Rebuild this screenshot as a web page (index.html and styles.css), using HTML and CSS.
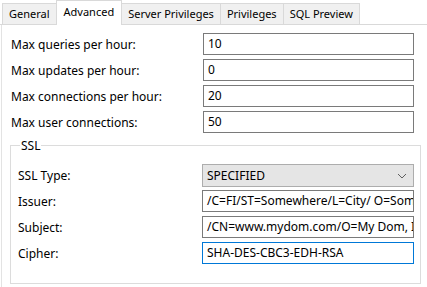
FILE: index.html
```html
<!DOCTYPE html>
<html>
<head>
<meta charset="utf-8">
<link rel="stylesheet" href="styles.css">
</head>
<body>
<div class="tabs">
  <div class="tab">General</div>
  <div class="tab active">Advanced</div>
  <div class="tab">Server Privileges</div>
  <div class="tab">Privileges</div>
  <div class="tab">SQL Preview</div>
</div>
<div class="panel">
  <div class="row"><span class="label">Max queries per hour:</span><div class="field">10</div></div>
  <div class="row"><span class="label">Max updates per hour:</span><div class="field">0</div></div>
  <div class="row"><span class="label">Max connections per hour:</span><div class="field">20</div></div>
  <div class="row"><span class="label">Max user connections:</span><div class="field">50</div></div>
  <fieldset class="group">
    <legend>SSL</legend>
    <div class="row sub"><span class="label">SSL Type:</span><div class="field select"><span>SPECIFIED</span><svg width="10" height="6" viewBox="0 0 10 6"><path d="M1 1 L5 5 L9 1" fill="none" stroke="#606060" stroke-width="1"/></svg></div></div>
    <div class="row sub"><span class="label">Issuer:</span><div class="field">/C=FI/ST=Somewhere/L=City/ O=Some Company/CN=www.mydom.com</div></div>
    <div class="row sub"><span class="label">Subject:</span><div class="field">/CN=www.mydom.com/O=My Dom, Inc./C=US</div></div>
    <div class="row sub"><span class="label">Cipher:</span><div class="field focus">SHA-DES-CBC3-EDH-RSA</div></div>
  </fieldset>
</div>
</body>
</html>
```
FILE: styles.css
```css
html, body {
  margin: 0;
  padding: 0;
  background: #ffffff;
  font-family: "Noto Sans", "Open Sans", sans-serif;
  font-size: 12px;
  color: #000;
}
.tabs {
  display: flex;
  align-items: flex-end;
  height: 24px;
  padding-left: 2px;
  border-bottom: 1px solid #d9d9d9;
  background: #ffffff;
}
.tab {
  height: 21px;
  line-height: 19px;
  padding: 0 6px;
  font-size: 11px;
  background: #f0f0f0;
  border: 1px solid #d9d9d9;
  border-bottom: none;
  margin-right: -1px;
  box-sizing: border-box;
}
.tab.active {
  line-height: 21px;
  background: #fff;
  margin-bottom: -1px;
  height: 25px;
  position: relative;
  z-index: 1;
  padding: 0 7px;
}
.panel {
  border-left: 1px solid #e3e3e3;
  margin-left: 1px;
  padding: 8px 13px 0 9px;
  height: 262px;
  box-sizing: border-box;
}
.row {
  display: flex;
  align-items: center;
  height: 22px;
  margin-bottom: 4px;
}
.label {
  width: 192px;
  flex: none;
}
.field {
  flex: 1;
  min-width: 0;
  height: 22px;
  box-sizing: border-box;
  border: 1px solid #7a7a7a;
  padding: 0 4px;
  line-height: 20px;
  white-space: nowrap;
  overflow: hidden;
  background: #fff;
}
.field.select {
  background: #e5e5e5;
  border-color: #adadad;
  display: flex;
  align-items: center;
  justify-content: space-between;
  padding-right: 6px;
  height: 23px;
}
.field.focus {
  border-color: #0078d7;
}
.group {
  min-width: 0;
  min-inline-size: 0;
  margin: 3px -7px 0 -1px;
  border: 1px solid #dcdcdc;
  padding: 10px 6px 15px 7px;
}
.group legend {
  padding: 0 1px;
  margin-left: 2px;
}
.sub .label {
  width: 184px;
}
.sub.row {
  margin-bottom: 4px;
}
.sub.row:first-of-type {
  height: 23px;
  margin-bottom: 3px;
}
```
